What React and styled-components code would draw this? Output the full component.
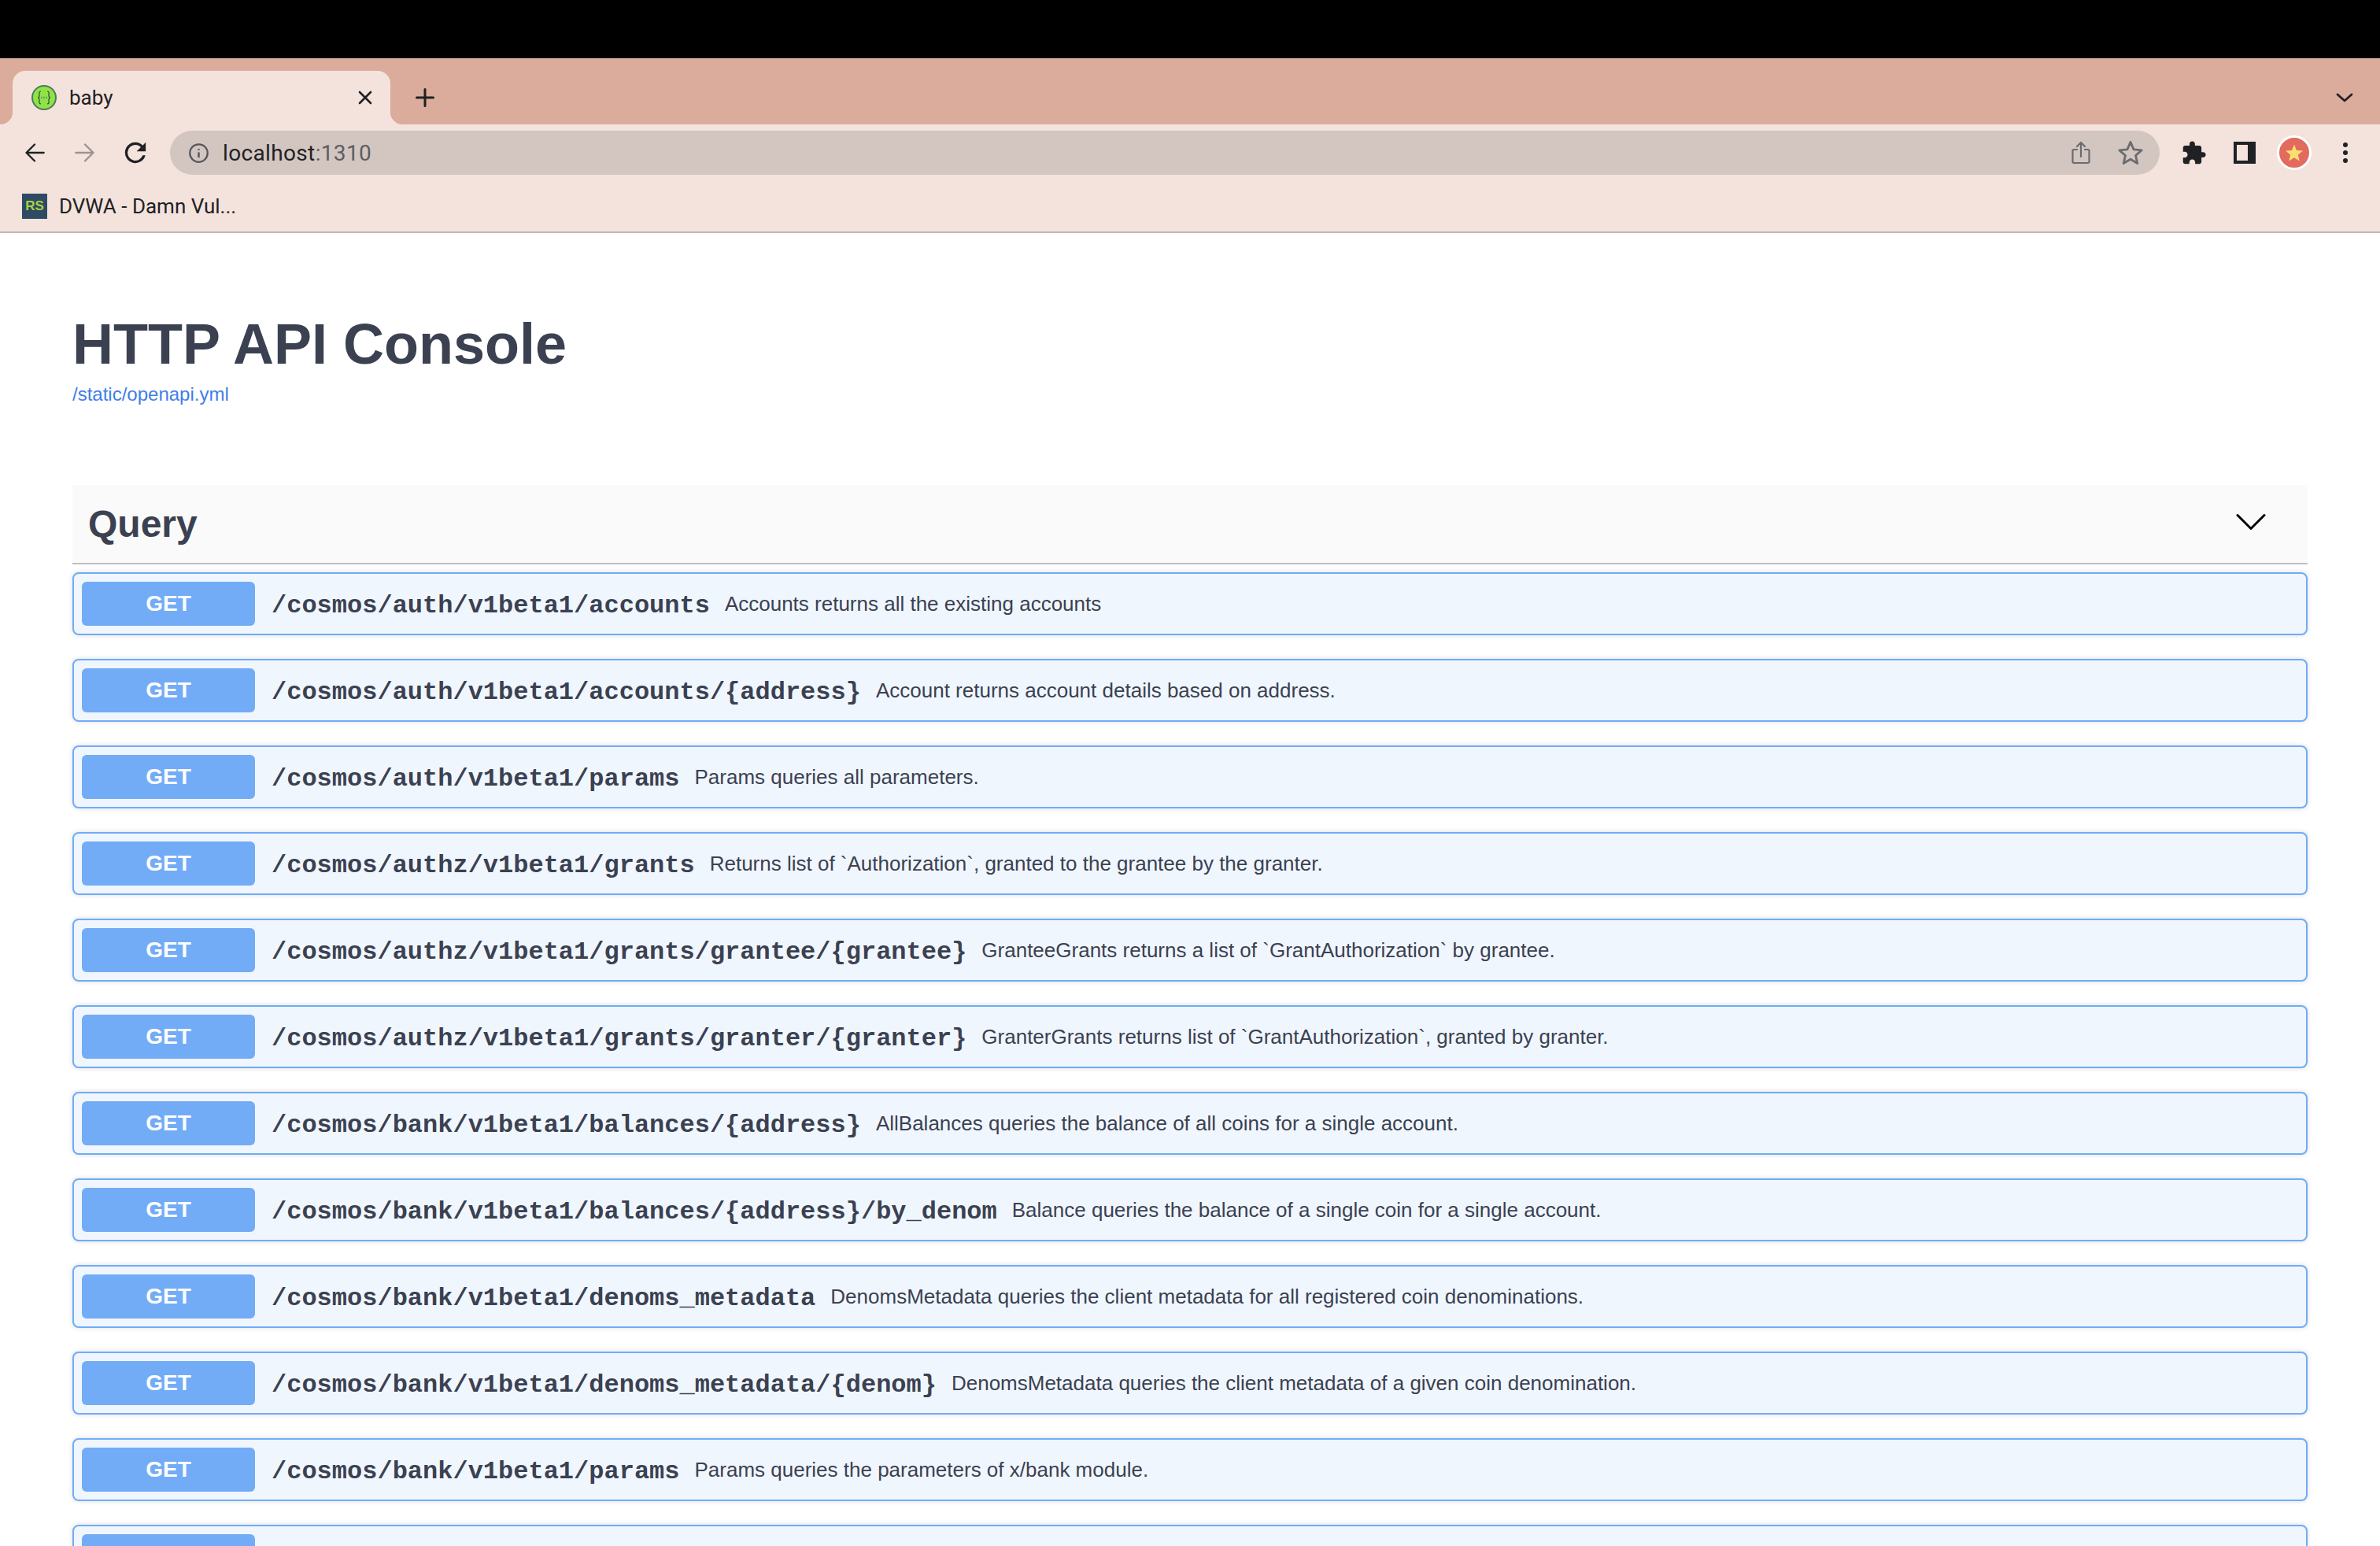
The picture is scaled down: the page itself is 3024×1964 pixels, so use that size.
import styled, { createGlobalStyle } from "styled-components";

const GlobalStyle = createGlobalStyle`
  html, body {
    margin: 0;
    padding: 0;
    background: #fff;
    overflow: hidden;
  }
`;

const routes = [
  ["/cosmos/auth/v1beta1/accounts", "Accounts returns all the existing accounts"],
  ["/cosmos/auth/v1beta1/accounts/{address}", "Account returns account details based on address."],
  ["/cosmos/auth/v1beta1/params", "Params queries all parameters."],
  ["/cosmos/authz/v1beta1/grants", "Returns list of `Authorization`, granted to the grantee by the granter."],
  ["/cosmos/authz/v1beta1/grants/grantee/{grantee}", "GranteeGrants returns a list of `GrantAuthorization` by grantee."],
  ["/cosmos/authz/v1beta1/grants/granter/{granter}", "GranterGrants returns list of `GrantAuthorization`, granted by granter."],
  ["/cosmos/bank/v1beta1/balances/{address}", "AllBalances queries the balance of all coins for a single account."],
  ["/cosmos/bank/v1beta1/balances/{address}/by_denom", "Balance queries the balance of a single coin for a single account."],
  ["/cosmos/bank/v1beta1/denoms_metadata", "DenomsMetadata queries the client metadata for all registered coin denominations."],
  ["/cosmos/bank/v1beta1/denoms_metadata/{denom}", "DenomsMetadata queries the client metadata of a given coin denomination."],
  ["/cosmos/bank/v1beta1/params", "Params queries the parameters of x/bank module."],
];

const Window = styled.div`
  height: 1964px;
  overflow: hidden;
  display: flex;
  flex-direction: column;
  font-family: "Liberation Sans", Arial, sans-serif;
`;

const TopBar = styled.div`
  height: 74px;
  flex: none;
  background: #000;
`;

const TabStrip = styled.div`
  height: 84px;
  flex: none;
  background: #dbac9b;
  display: flex;
  align-items: flex-end;
  padding: 0 33px 0 16px;
`;

const Tab = styled.div`
  position: relative;
  width: 480px;
  height: 68px;
  box-sizing: border-box;
  padding: 0 20px 0 24px;
  background: #f3e3dc;
  border-radius: 16px 16px 0 0;
  display: flex;
  align-items: center;
  gap: 16px;
  font: 400 26px Roboto, sans-serif;
  color: #1f2124;

  &::before,
  &::after {
    content: "";
    position: absolute;
    bottom: 0;
    width: 16px;
    height: 16px;
  }
  &::before {
    left: -16px;
    background: radial-gradient(circle at 0 0, #dbac9b 16px, #f3e3dc 16.5px);
  }
  &::after {
    right: -16px;
    background: radial-gradient(circle at 100% 0, #dbac9b 16px, #f3e3dc 16.5px);
  }
`;

const TabTitle = styled.span`
  flex: 1;
`;

const IconSlot = styled.span`
  display: flex;
  align-items: center;
  justify-content: center;
  flex: none;
`;

const NewTab = styled(IconSlot)`
  height: 68px;
  margin-left: 30px;
`;

const StripEnd = styled(IconSlot)`
  height: 68px;
  margin-left: auto;
`;

const Toolbar = styled.div`
  height: 78px;
  flex: none;
  box-sizing: border-box;
  background: #f3e3dc;
  display: flex;
  align-items: flex-start;
  padding: 8px 0 0 30px;
`;

const NavGroup = styled.div`
  height: 56px;
  display: flex;
  align-items: center;
  gap: 36px;
  margin-right: 30px;
`;

const Omnibox = styled.div`
  width: 2528px;
  height: 56px;
  box-sizing: border-box;
  background: #d3c6c1;
  border-radius: 28px;
  display: flex;
  align-items: center;
  padding: 0 20px 0 23px;
  font: 400 28px Roboto, sans-serif;
  color: #1f2124;
`;

const Address = styled.span`
  flex: 1;
  margin-left: 17px;
  letter-spacing: 0.35px;
`;

const Port = styled.span`
  color: #5c5f63;
`;

const OmniActions = styled.div`
  display: flex;
  align-items: center;
  gap: 34px;
`;

const ToolActions = styled.div`
  height: 56px;
  display: flex;
  align-items: center;
  margin-left: 27px;
`;

const Avatar = styled.span`
  width: 44px;
  height: 44px;
  margin: 0 27px 0 27px;
  box-sizing: border-box;
  border-radius: 50%;
  border: 3px solid #fff;
  background: #e26a5e;
  display: flex;
  align-items: center;
  justify-content: center;
`;

const PanelIcon = styled.span`
  width: 28px;
  height: 28px;
  margin-left: 34px;
  box-sizing: border-box;
  background: #1f2124;
  padding: 4px 10px 4px 4px;

  &::before {
    content: "";
    display: block;
    width: 100%;
    height: 100%;
    background: #f3e3dc;
  }
`;

const Dots = styled.span`
  display: flex;
  flex-direction: column;
  gap: 4px;
  margin-left: 13px;

  i {
    width: 6px;
    height: 6px;
    border-radius: 50%;
    background: #1f2124;
  }
`;

const Bookmarks = styled.div`
  height: 60px;
  flex: none;
  box-sizing: border-box;
  background: #f3e3dc;
  border-bottom: 2px solid #c5b6b0;
  display: flex;
  align-items: center;
  padding: 0 0 6px 28px;
  gap: 15px;
  font: 400 26px Roboto, sans-serif;
  color: #1f2124;
`;

const BookmarkIcon = styled.span`
  width: 32px;
  height: 32px;
  background: #2f4a63;
  color: #a9d13f;
  font: 700 17px/32px "Liberation Sans", sans-serif;
  text-align: center;
`;

const Page = styled.main`
  flex: 1;
  min-height: 0;
  padding: 0 92px;
  background: #fff;
  color: #3b4151;
`;

const Title = styled.h1`
  margin: 0;
  padding-top: 98px;
  font-size: 72px;
  line-height: 86px;
  font-weight: 700;
`;

const SpecLink = styled.a`
  display: block;
  margin-top: 6px;
  font-size: 24px;
  line-height: 30px;
  color: #3f7ee8;
`;

const SectionHead = styled.div`
  height: 101px;
  margin-top: 100px;
  box-sizing: border-box;
  background: #fafafa;
  border-bottom: 2px solid #bfbfc1;
  display: flex;
  align-items: center;
  justify-content: space-between;
  padding: 0 53px 0 20px;
  font-size: 48px;
  font-weight: 700;
`;

const RouteList = styled.div`
  display: flex;
  flex-direction: column;
  gap: 30px;
  margin-top: 10px;
`;

const Route = styled.div`
  height: 80px;
  flex: none;
  box-sizing: border-box;
  padding: 0 10px;
  background: #f0f6fe;
  border: 2px solid #70acf7;
  border-radius: 8px;
  box-shadow: 0 0 6px rgba(0, 0, 0, 0.14);
  display: flex;
  align-items: center;
`;

const Method = styled.span`
  width: 220px;
  height: 56px;
  flex: none;
  background: #73acf6;
  border-radius: 6px;
  color: #fff;
  font-size: 28px;
  font-weight: 700;
  display: flex;
  align-items: center;
  justify-content: center;
`;

const Path = styled.span`
  margin-left: 21px;
  padding-top: 4px;
  font: 700 32px "Liberation Mono", Courier, monospace;
  white-space: nowrap;
`;

const Summary = styled.span`
  margin-left: 19px;
  font-size: 26px;
  white-space: nowrap;
`;

const Stroke = ({ size = 28, view = 24, width = 2, color = "#1f2124", d }) => (
  <svg width={size} height={size} viewBox={`0 0 ${view} ${view}`} fill="none" stroke={color} strokeWidth={width} strokeLinecap="round" strokeLinejoin="round">
    <path d={d} />
  </svg>
);

const SwaggerIcon = () => (
  <svg width="32" height="32" viewBox="0 0 32 32">
    <circle cx="16" cy="16" r="15" fill="#8fe347" stroke="#4c7a5c" strokeWidth="2" />
    <path d="M12 8c-3 0-2 3-2 5s-1 3-2 3c1 0 2 1 2 3s-1 5 2 5M20 8c3 0 2 3 2 5s1 3 2 3c-1 0-2 1-2 3s1 5-2 5" fill="none" stroke="#2f4a3a" strokeWidth="1.2" />
    <path d="M12 16h8" stroke="#6da85c" strokeWidth="2.4" strokeDasharray="2 1" />
  </svg>
);

const App = () => (
  <Window>
    <GlobalStyle />
    <TopBar />
    <TabStrip>
      <Tab>
        <IconSlot>
          <SwaggerIcon />
        </IconSlot>
        <TabTitle>baby</TabTitle>
        <Stroke size={24} width={2.6} d="M5 5l14 14M19 5L5 19" />
      </Tab>
      <NewTab>
        <Stroke size={28} width={2.6} d="M12 3v18M3 12h18" />
      </NewTab>
      <StripEnd>
        <Stroke size={24} width={2.8} d="M3 8l9 8 9-8" />
      </StripEnd>
    </TabStrip>
    <Toolbar>
      <NavGroup>
        <Stroke size={28} d="M22 12H3M12 3l-9 9 9 9" />
        <Stroke size={28} color="#9c9390" d="M2 12h19M12 3l9 9-9 9" />
        <svg width="28" height="28" viewBox="3.5 3.5 17 17" fill="#1f2124">
          <path d="M17.65 6.35A7.96 7.96 0 0 0 12 4a8 8 0 1 0 7.73 10h-2.08A6 6 0 1 1 12 6c1.66 0 3.14.69 4.22 1.78L13 11h7V4l-2.35 2.35z" />
        </svg>
      </NavGroup>
      <Omnibox>
        <svg width="27" height="27" viewBox="0 0 24 24" fill="none" stroke="#55575c" strokeWidth="2">
          <circle cx="12" cy="12" r="10" />
          <path d="M12 11v6M12 7v1.6" strokeWidth="2.2" />
        </svg>
        <Address>
          localhost<Port>:1310</Port>
        </Address>
        <OmniActions>
          <svg width="24" height="30" viewBox="0 0 24 30" fill="none" stroke="#6a6c6f" strokeWidth="2.2" strokeLinecap="round" strokeLinejoin="round">
            <path d="M7 11H3a1.5 1.5 0 0 0-1.5 1.5v14A1.5 1.5 0 0 0 3 28h18a1.5 1.5 0 0 0 1.5-1.5v-14A1.5 1.5 0 0 0 21 11h-4M12 20V2M7 7l5-5 5 5" />
          </svg>
          <svg width="34" height="34" viewBox="0 0 24 24" fill="none" stroke="#6a6c6f" strokeWidth="2" strokeLinejoin="round">
            <path d="M12 2.5l2.9 6.6 7.1.7-5.4 4.7 1.6 7-6.2-3.7-6.2 3.7 1.6-7L2 9.8l7.1-.7z" />
          </svg>
        </OmniActions>
      </Omnibox>
      <ToolActions>
        <svg width="33" height="33" viewBox="0 0 24 24" fill="#1f2124">
          <path d="M20.5 11H19V7c0-1.1-.9-2-2-2h-4V3.5C13 2.12 11.88 1 10.5 1S8 2.12 8 3.5V5H4c-1.1 0-1.99.9-1.99 2v3.8H3.5c1.49 0 2.7 1.21 2.7 2.7s-1.21 2.7-2.7 2.7H2V20c0 1.1.9 2 2 2h3.8v-1.5c0-1.49 1.21-2.7 2.7-2.7 1.49 0 2.7 1.21 2.7 2.7V22H17c1.1 0 2-.9 2-2v-4h1.5c1.38 0 2.5-1.12 2.5-2.5S21.88 11 20.5 11z" />
        </svg>
        <PanelIcon />
        <Avatar>
          <svg width="24" height="24" viewBox="0 0 24 24" fill="#f8e06f">
            <path d="M12 1.5l3 7.6 8 .5-6.2 5.1 2 7.8-6.8-4.3-6.8 4.3 2-7.8L1 9.6l8-.5z" />
          </svg>
        </Avatar>
        <Dots>
          <i />
          <i />
          <i />
        </Dots>
      </ToolActions>
    </Toolbar>
    <Bookmarks>
      <BookmarkIcon>RS</BookmarkIcon>
      DVWA - Damn Vul...
    </Bookmarks>
    <Page>
      <Title>HTTP API Console</Title>
      <SpecLink>/static/openapi.yml</SpecLink>
      <SectionHead>
        Query
        <Stroke size={38} view={38} width={3} color="#000" d="M2 7.5l17 17 17-17" />
      </SectionHead>
      <RouteList>
        {routes.map(([path, text]) => (
          <Route key={path}>
            <Method>GET</Method>
            <Path>{path}</Path>
            <Summary>{text}</Summary>
          </Route>
        ))}
        <Route>
          <Method />
        </Route>
      </RouteList>
    </Page>
  </Window>
);

export default App;
